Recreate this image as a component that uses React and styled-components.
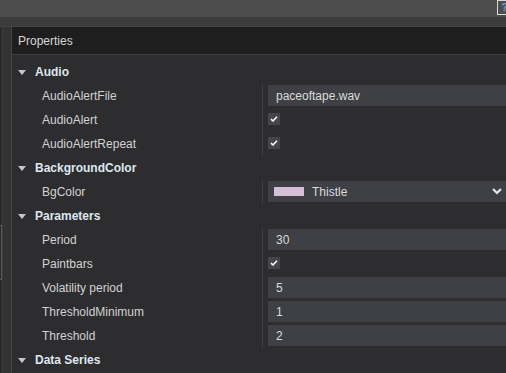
import styled, { createGlobalStyle } from "styled-components";

const GlobalStyle = createGlobalStyle`
  html, body {
    margin: 0;
    padding: 0;
    background: #333333;
    overflow: hidden;
  }
  body {
    font-family: "Liberation Sans", Arial, sans-serif;
    font-size: 12px;
  }
`;

const Page = styled.div`
  width: 506px;
  height: 373px;
  display: flex;
  flex-direction: column;
  overflow: hidden;
`;

const TopBar = styled.div`
  height: 17px;
  background: #4d4d4d;
  display: flex;
  justify-content: flex-end;
  overflow: hidden;
`;

const HelpBox = styled.div`
  width: 13px;
  height: 13px;
  margin-right: -6px;
  border: 1px solid #d8d8d8;
  color: #6aa0e0;
  font-size: 11px;
  font-weight: bold;
  line-height: 13px;
  text-align: center;
`;

const SubBar = styled.div`
  height: 9px;
  background: #3b3b3b;
  border-bottom: 1px solid #444444;
`;

const Main = styled.div`
  flex: 1;
  display: flex;
  min-height: 0;
`;

const LeftStrip = styled.div`
  width: 2px;
  background: #2a2a2a;
  border-right: 1px solid #3c3c3c;
  display: flex;
  flex-direction: column;
`;

const StripThumb = styled.div`
  margin-top: 198px;
  height: 53px;
  border-right: 1px solid #5a5a5a;
  border-top: 1px solid #5a5a5a;
  border-bottom: 1px solid #5a5a5a;
`;

const Gutter = styled.div`
  width: 8px;
  background: #333333;
`;

const Panel = styled.div`
  flex: 1;
  display: flex;
  flex-direction: column;
  background: #2d2d30;
  border-left: 1px solid #434343;
`;

const Header = styled.div`
  height: 27px;
  background: #1e1e1e;
  border-bottom: 1px solid #3e3e3e;
  color: #d6d6d6;
  display: flex;
  align-items: center;
  padding-left: 6px;
`;

const Body = styled.div`
  padding-top: 5px;
  display: flex;
  flex-direction: column;
`;

const CategoryRow = styled.div`
  height: 24px;
  display: flex;
  align-items: center;
  padding-left: 6px;
  color: #dfe6ef;
  font-weight: bold;
`;

const Arrow = styled.span`
  width: 0;
  height: 0;
  border-left: 4.5px solid transparent;
  border-right: 4.5px solid transparent;
  border-top: 5px solid #c8c8c8;
  margin-right: 9px;
`;

const PropRow = styled.div`
  height: 24px;
  display: grid;
  grid-template-columns: 250px 1fr;
`;

const Label = styled.div`
  padding-left: 30px;
  color: #d2d2d2;
  display: flex;
  align-items: center;
`;

const ValueCell = styled.div`
  border-left: 1px solid #3f3f3f;
  padding-left: 5px;
  display: flex;
  align-items: flex-start;
`;

const TextInput = styled.div`
  margin-top: 1px;
  height: 21px;
  flex: 1;
  background: #3f3f46;
  color: #dcdcdc;
  padding-left: 8px;
  display: flex;
  align-items: center;
`;

const CheckBox = styled.div`
  margin-top: 5px;
  width: 12px;
  height: 12px;
  background: #45454c;
  display: flex;
  align-items: center;
  justify-content: center;
`;

const Select = styled(TextInput)`
  padding-left: 6px;
  padding-right: 4px;
`;

const Swatch = styled.span`
  width: 30px;
  height: 9px;
  background: ${(p) => p.color};
  margin-right: 8px;
`;

const SelectText = styled.span`
  flex: 1;
`;

function Check() {
  return (
    <CheckBox>
      <svg width="8" height="8" viewBox="0 0 8 8">
        <path d="M1 4.2 L3 6 L7 1.8" stroke="#ffffff" strokeWidth="1.6" fill="none" />
      </svg>
    </CheckBox>
  );
}

function Chevron() {
  return (
    <svg width="10" height="7" viewBox="0 0 10 7">
      <path d="M1 1 L5 5 L9 1" stroke="#e6e6e6" strokeWidth="2.2" fill="none" />
    </svg>
  );
}

const groups = [
  {
    name: "Audio",
    props: [
      { label: "AudioAlertFile", value: "paceoftape.wav" },
      { label: "AudioAlert", check: true },
      { label: "AudioAlertRepeat", check: true },
    ],
  },
  {
    name: "BackgroundColor",
    props: [{ label: "BgColor", color: "#d8bfd8", value: "Thistle" }],
  },
  {
    name: "Parameters",
    props: [
      { label: "Period", value: "30" },
      { label: "Paintbars", check: true },
      { label: "Volatility period", value: "5" },
      { label: "ThresholdMinimum", value: "1" },
      { label: "Threshold", value: "2" },
    ],
  },
  { name: "Data Series", props: [] },
];

function Value({ prop }) {
  if (prop.check) return <Check />;
  if (prop.color)
    return (
      <Select>
        <Swatch color={prop.color} />
        <SelectText>{prop.value}</SelectText>
        <Chevron />
      </Select>
    );
  return <TextInput>{prop.value}</TextInput>;
}

export default function App() {
  return (
    <Page>
      <GlobalStyle />
      <TopBar>
        <HelpBox>?</HelpBox>
      </TopBar>
      <SubBar />
      <Main>
        <LeftStrip>
          <StripThumb />
        </LeftStrip>
        <Gutter />
        <Panel>
          <Header>Properties</Header>
          <Body>
            {groups.map((g) => (
              <div key={g.name}>
                <CategoryRow>
                  <Arrow />
                  {g.name}
                </CategoryRow>
                {g.props.map((p) => (
                  <PropRow key={p.label}>
                    <Label>{p.label}</Label>
                    <ValueCell>
                      <Value prop={p} />
                    </ValueCell>
                  </PropRow>
                ))}
              </div>
            ))}
          </Body>
        </Panel>
      </Main>
    </Page>
  );
}
